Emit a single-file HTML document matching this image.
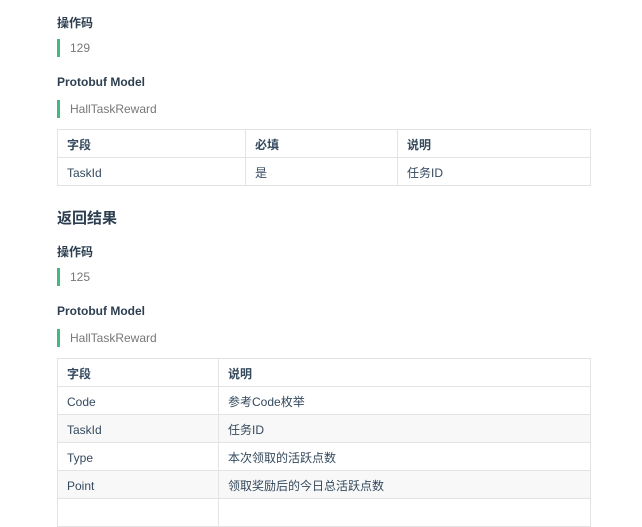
<!DOCTYPE html>
<html><head><meta charset="utf-8"><style>
body{margin:0;background:#fff;font-family:"Liberation Sans","Noto Sans CJK SC",sans-serif;color:#2c3e50;}
.a{position:absolute;left:57px;}
.h{font-size:12px;font-weight:bold;color:#2c3e50;}
.q{border-left:3px solid #42b983;height:18px;line-height:18px;padding-left:10px;font-size:12px;color:#777;}
.h2{font-size:15px;font-weight:bold;color:#2c3e50;}
table{border-collapse:collapse;width:534px;font-size:12px;color:#34495e;}
td{border:1px solid #e3e3e3;height:25px;line-height:16px;padding:2px 0 0 9px;box-sizing:content-box;}
tr.g td{background:#f8f8f8;}
</style></head><body>
<div class="a h" style="top:14px">操作码</div>
<div class="a q" style="top:39px">129</div>
<div class="a h" style="top:75px">Protobuf Model</div>
<div class="a q" style="top:100px">HallTaskReward</div>
<table class="a" style="top:129px">
<tr><td style="width:178px;font-weight:bold">字段</td><td style="width:142px;font-weight:bold">必填</td><td style="font-weight:bold">说明</td></tr>
<tr><td>TaskId</td><td>是</td><td>任务ID</td></tr>
</table>
<div class="a h2" style="top:207px">返回结果</div>
<div class="a h" style="top:243px">操作码</div>
<div class="a q" style="top:268px">125</div>
<div class="a h" style="top:304px">Protobuf Model</div>
<div class="a q" style="top:329px">HallTaskReward</div>
<table class="a" style="top:358px">
<tr><td style="width:151px;font-weight:bold">字段</td><td style="font-weight:bold">说明</td></tr>
<tr><td>Code</td><td>参考Code枚举</td></tr>
<tr class="g"><td>TaskId</td><td>任务ID</td></tr>
<tr><td>Type</td><td>本次领取的活跃点数</td></tr>
<tr class="g"><td>Point</td><td>领取奖励后的今日总活跃点数</td></tr>
<tr><td></td><td></td></tr>
</table>
</body></html>
